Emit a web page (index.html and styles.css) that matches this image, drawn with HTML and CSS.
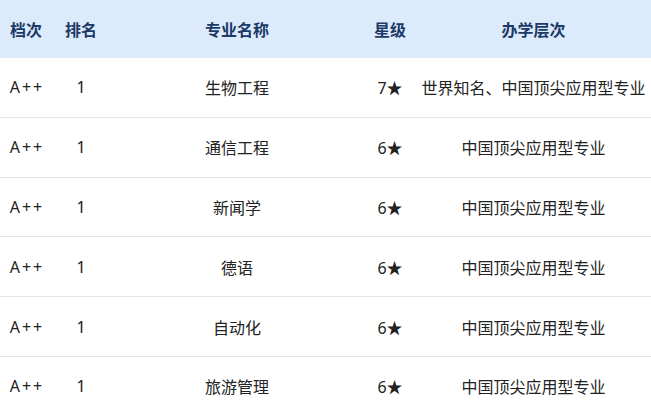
FILE: index.html
```html
<!DOCTYPE html>
<html lang="zh">
<head>
<meta charset="utf-8">
<link rel="stylesheet" href="styles.css">
</head>
<body>
<table class="rank">
  <colgroup>
    <col class="c1"><col class="c2"><col class="c3"><col class="c4"><col class="c5">
  </colgroup>
  <thead>
    <tr><th>档次</th><th>排名</th><th>专业名称</th><th>星级</th><th>办学层次</th></tr>
  </thead>
  <tbody>
    <tr><td class="grade">A++</td><td>1</td><td>生物工程</td><td>7★</td><td>世界知名、中国顶尖应用型专业</td></tr>
    <tr><td class="grade">A++</td><td>1</td><td>通信工程</td><td>6★</td><td>中国顶尖应用型专业</td></tr>
    <tr><td class="grade">A++</td><td>1</td><td>新闻学</td><td>6★</td><td>中国顶尖应用型专业</td></tr>
    <tr><td class="grade">A++</td><td>1</td><td>德语</td><td>6★</td><td>中国顶尖应用型专业</td></tr>
    <tr><td class="grade">A++</td><td>1</td><td>自动化</td><td>6★</td><td>中国顶尖应用型专业</td></tr>
    <tr><td class="grade">A++</td><td>1</td><td>旅游管理</td><td>6★</td><td>中国顶尖应用型专业</td></tr>
  </tbody>
</table>
</body>
</html>
```
FILE: styles.css
```css
html, body {
  margin: 0;
  padding: 0;
  background: #ffffff;
}
body {
  font-family: "Noto Sans", "Noto Sans CJK SC", sans-serif;
  font-size: 16px;
  color: #222222;
}
.rank {
  width: 651px;
  border-collapse: collapse;
  table-layout: fixed;
}
.c1 { width: 52px; }
.c2 { width: 58px; }
.c3 { width: 254px; }
.c4 { width: 52px; }
.c5 { width: 235px; }
.rank th {
  height: 58px;
  padding: 0;
  background: #dcebfc;
  color: #1c3a66;
  font-weight: 700;
  text-align: center;
  vertical-align: middle;
}
.rank td {
  height: 58.8px;
  padding: 0;
  text-align: center;
  vertical-align: middle;
  white-space: nowrap;
  border-bottom: 1px solid #e6e6e6;
}
.rank td.grade {
  letter-spacing: 2px;
  padding-left: 2px;
}
```
